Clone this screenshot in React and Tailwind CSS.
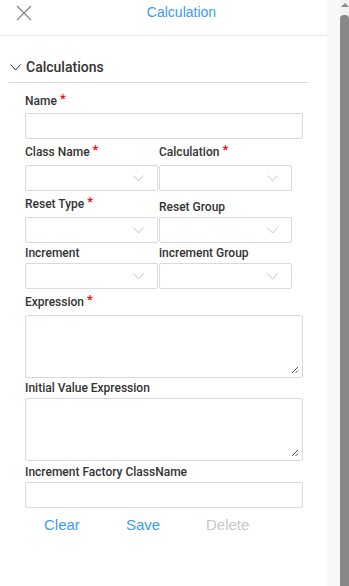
import React from "react";

const Star = () => <span className="text-[#ff0000] ml-[3px] text-[13px] leading-none relative -top-[3px]">*</span>;

const Chevron = ({ className = "" }) => (
  <svg className={className} width="11" height="7" viewBox="0 0 11 7" fill="none">
    <path d="M0.5 0.5L5.5 6L10.5 0.5" stroke="currentColor" strokeWidth="1" />
  </svg>
);

const Label = ({ text, req, h, pt = 0 }) => (
  <div
    className={`flex items-center text-[12px] font-medium text-[#333] ${h}`}
    style={{ paddingTop: pt, fontFamily: "Roboto, 'Liberation Sans', sans-serif" }}
  >
    {text}
    {req && <Star />}
  </div>
);

const Select = () => (
  <div className="w-[133px] h-[26px] border border-[#d9d9d9] rounded-[2px] bg-white flex items-center justify-end pr-[13px]">
    <Chevron className="text-[#c4c4c4]" />
  </div>
);

const SelectRow = ({ left, right, h }) => (
  <div>
    <div className="flex">
      <div className="w-[134px]">
        <Label text={left.text} req={left.req} h={h} />
      </div>
      <div className="w-[134px]">
        <Label text={right.text} req={right.req} h={h} pt={right.pt} />
      </div>
    </div>
    <div className="flex gap-px">
      <Select />
      <Select />
    </div>
  </div>
);

const Resize = () => (
  <svg className="absolute right-[3px] bottom-[3px]" width="8" height="8" viewBox="0 0 8 8">
    <path d="M7 1L1 7M7 4.5L4.5 7" stroke="#555" strokeWidth="1" />
  </svg>
);

export default function App() {
  return (
    <div className="flex w-[349px] h-[586px] overflow-hidden bg-white" style={{ fontFamily: "'Liberation Sans', Arial, sans-serif" }}>
      <div className="w-[327px] bg-white">
        <div className="relative h-[36px] border-b border-[#e6e6e6] flex items-center justify-center">
          <svg className="absolute left-[16px] top-[5px]" width="16" height="16" viewBox="0 0 16 16">
            <path d="M1 1L15 15M15 1L1 15" stroke="#8a8a8a" strokeWidth="1.4" />
          </svg>
          <span className="text-[14px] text-[#3d9af2] -mt-[11px] ml-[36px]">Calculation</span>
        </div>

        <div className="px-[9px] pr-[18px]">
          <div className="h-[47px] pt-[22px] border-b border-[#dcdcdc] flex items-start">
            <Chevron className="text-[#333] mt-[6px] ml-[1px] mr-[5px] w-[11px]" />
            <span
              className="text-[14px] font-medium text-[#333] leading-[18px]"
              style={{ fontFamily: "Roboto, 'Liberation Sans', sans-serif" }}
            >
              Calculations
            </span>
          </div>
        </div>

        <div className="pl-[25px] w-[303px]">
          <Label text="Name" req h="h-[30px]" pt={6} />
          <div className="h-[26px] border border-[#d9d9d9] rounded-[2px]" />

          <SelectRow left={{ text: "Class Name", req: true }} right={{ text: "Calculation", req: true }} h="h-[26px]" />
          <SelectRow left={{ text: "Reset Type", req: true }} right={{ text: "Reset Group", pt: 6 }} h="h-[26px]" />
          <SelectRow left={{ text: "Increment" }} right={{ text: "increment Group" }} h="h-[20px]" />

          <Label text="Expression" req h="h-[26px]" />
          <div className="relative h-[63px] border border-[#d9d9d9] rounded-[2px]">
            <Resize />
          </div>

          <Label text="Initial Value Expression" h="h-[20px]" />
          <div className="relative h-[63px] border border-[#d9d9d9] rounded-[2px]">
            <Resize />
          </div>

          <Label text="Increment Factory ClassName" h="h-[21px]" />
          <div className="h-[26px] border border-[#d9d9d9] rounded-[2px]" />

          <div className="flex h-[34px] items-center text-[15px] pl-[19px]">
            <span className="text-[#3d9af2] w-[82px]">Clear</span>
            <span className="text-[#3d9af2] w-[80px]">Save</span>
            <span className="text-[#c8c8c8]">Delete</span>
          </div>
        </div>
      </div>
      <div className="w-[13px] bg-[#f8f8f8]" />
      <div className="w-[9px] bg-[#f1f1f1] flex flex-col items-center">
        <div className="mt-[3px] w-0 h-0 border-l-[4px] border-r-[4px] border-b-[4px] border-l-transparent border-r-transparent border-b-[#8a8a8a]" />
        <div className="mt-[8px] flex-1 w-full bg-[#888] rounded-t-[4px]" />
      </div>
    </div>
  );
}
